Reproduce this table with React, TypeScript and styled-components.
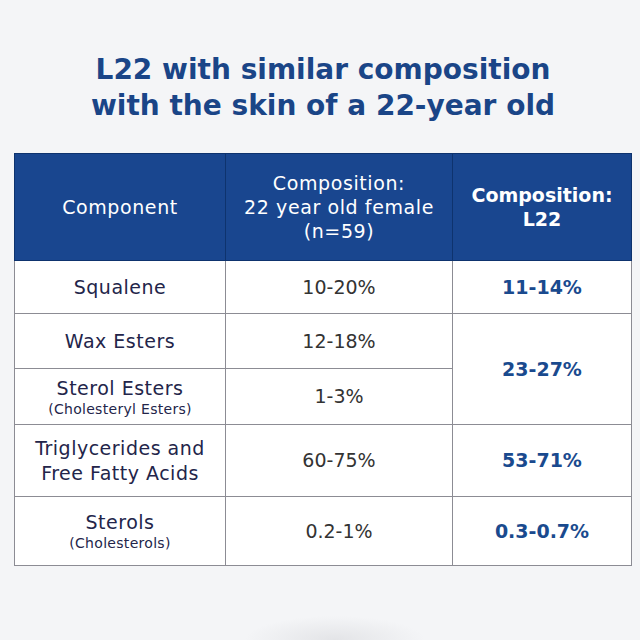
import React from "react";
import styled, { createGlobalStyle } from "styled-components";

const Global = createGlobalStyle`
  html, body { margin: 0; padding: 0; background: #f4f5f7; }
  body { font-family: "DejaVu Sans", sans-serif; }
`;

const Page = styled.div`
  width: 640px;
  height: 640px;
  box-sizing: border-box;
  padding: 52px 8px 0 14px;
  display: flex;
  flex-direction: column;
  align-items: stretch;
  background: radial-gradient(ellipse 90px 24px at 335px 640px, #e3e4e7 0%, #f4f5f7 100%);
  background-color: #f4f5f7;
`;

const Title = styled.h1`
  margin: 0 0 29px 0;
  text-align: center;
  font-size: 28px;
  line-height: 36px;
  font-weight: 700;
  color: #1a4587;
`;

const Table = styled.table`
  width: 617px;
  border-collapse: collapse;
  background: #ffffff;
  table-layout: fixed;
`;

const HeadCell = styled.th<{ $bold?: boolean }>`
  background: #19468f;
  color: #ffffff;
  font-weight: ${(p) => (p.$bold ? 700 : 400)};
  font-size: 19px;
  line-height: 24px;
  letter-spacing: ${(p) => (p.$bold ? "0px" : "0.6px")};
  height: 106px;
  padding: 0 4px;
  border: 1px solid #0e336e;
  text-align: center;
  vertical-align: middle;
`;

const Cell = styled.td<{ $kind: "name" | "value" | "l22"; $h: number }>`
  height: ${(p) => p.$h}px;
  padding: 0 4px;
  border: 1px solid #8c8c94;
  text-align: center;
  vertical-align: middle;
  font-size: 19px;
  line-height: 25px;
  letter-spacing: ${(p) => (p.$kind === "name" ? "0.5px" : "0px")};
  color: ${(p) =>
    p.$kind === "name" ? "#23254a" : p.$kind === "value" ? "#333333" : "#1a4a8e"};
  font-weight: ${(p) => (p.$kind === "l22" ? 700 : 400)};
`;

const Sub = styled.div`
  font-size: 14px;
  line-height: 17px;
  letter-spacing: 0.3px;
`;

export default function App() {
  return (
    <>
      <Global />
      <Page>
        <Title>
          L22 with similar composition
          <br />
          with the skin of a 22-year old
        </Title>
        <Table>
          <colgroup>
            <col style={{ width: 211 }} />
            <col style={{ width: 227 }} />
            <col style={{ width: 179 }} />
          </colgroup>
          <thead>
            <tr>
              <HeadCell>Component</HeadCell>
              <HeadCell>
                Composition:
                <br />
                22 year old female
                <br />
                (n=59)
              </HeadCell>
              <HeadCell $bold>
                Composition:
                <br />
                L22
              </HeadCell>
            </tr>
          </thead>
          <tbody>
            <tr>
              <Cell $kind="name" $h={52}>Squalene</Cell>
              <Cell $kind="value" $h={52}>10-20%</Cell>
              <Cell $kind="l22" $h={52}>11-14%</Cell>
            </tr>
            <tr>
              <Cell $kind="name" $h={54}>Wax Esters</Cell>
              <Cell $kind="value" $h={54}>12-18%</Cell>
              <Cell $kind="l22" $h={109} rowSpan={2}>23-27%</Cell>
            </tr>
            <tr>
              <Cell $kind="name" $h={55}>
                Sterol Esters
                <Sub>(Cholesteryl Esters)</Sub>
              </Cell>
              <Cell $kind="value" $h={55}>1-3%</Cell>
            </tr>
            <tr>
              <Cell $kind="name" $h={71}>
                Triglycerides and
                <br />
                Free Fatty Acids
              </Cell>
              <Cell $kind="value" $h={71}>60-75%</Cell>
              <Cell $kind="l22" $h={71}>53-71%</Cell>
            </tr>
            <tr>
              <Cell $kind="name" $h={68}>
                Sterols
                <Sub>(Cholesterols)</Sub>
              </Cell>
              <Cell $kind="value" $h={68}>0.2-1%</Cell>
              <Cell $kind="l22" $h={68}>0.3-0.7%</Cell>
            </tr>
          </tbody>
        </Table>
      </Page>
    </>
  );
}
